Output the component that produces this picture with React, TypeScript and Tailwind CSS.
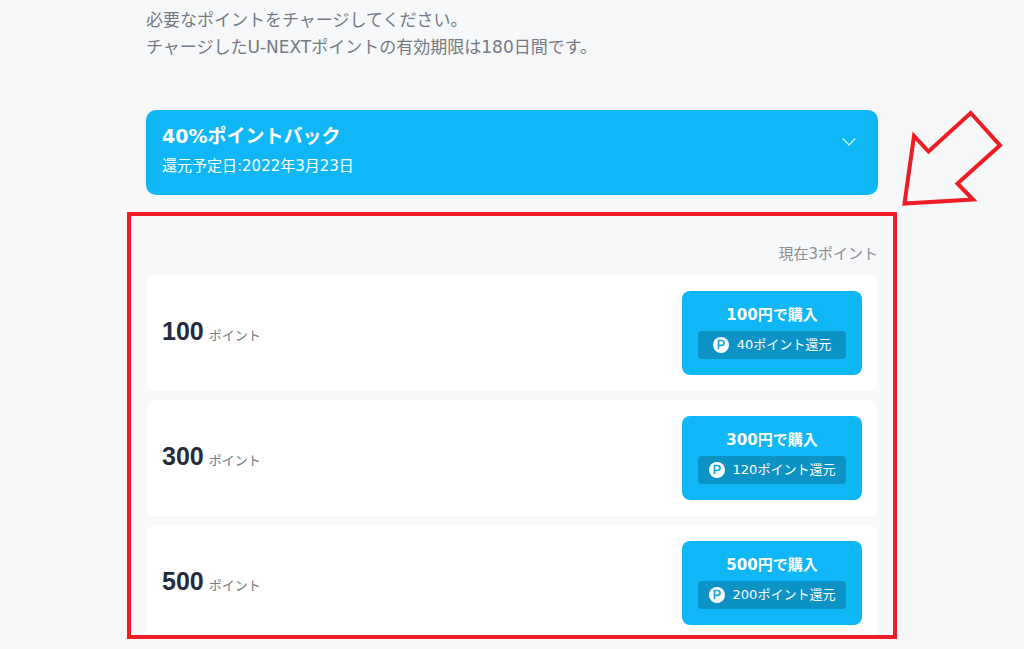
import { useState } from "react";

const PLANS = [
  { points: 100, price: 100, back: 40 },
  { points: 300, price: 300, back: 120 },
  { points: 500, price: 500, back: 200 }
];

function PointIcon() {
  return (
    <svg viewBox="0 0 16 16" className="size-4" fill="none" aria-hidden="true">
      <circle cx="8" cy="8" r="8" fill="#fff" />
      <path d="M5.500 12V3.500h3a2.400 2.400 0 0 1 0 4.900h-3" stroke="#10a9e6" strokeWidth="1.700" />
    </svg>
  );
}

function PlanCard({ points, price, back }: { points: number; price: number; back: number }) {
  return (
    <li className="flex items-center justify-between rounded-[10px] bg-white p-4">
      <p className="pb-1 text-[13px] text-[#747a83]">
        <span className="mr-[5px] font-['Liberation_Sans',sans-serif] text-[25px] leading-8 font-bold text-[#222c3c]">
          {points}
        </span>
        ポイント
      </p>
      <button
        type="button"
        className="flex h-[84px] w-[180px] flex-col items-center rounded-lg bg-[#10b7f7] px-4 pt-4 text-white"
      >
        <span className="text-[15px] leading-4 font-bold">{price}円で購入</span>
        <span className="mt-2 flex h-7 w-full items-center justify-center gap-2 rounded-sm bg-[#0d92c6] text-[13px] leading-4">
          <PointIcon />
          {back}ポイント還元
        </span>
      </button>
    </li>
  );
}

export default function App() {
  const [open, setOpen] = useState(false);

  return (
    <main className="relative min-h-screen bg-[#f7f8fa] px-4 pt-[7px] pb-[10px] font-['DejaVu_Sans','Noto_Sans_CJK_JP',sans-serif]">
      <div className="mx-auto max-w-[732px]">
        <p className="text-[17px] leading-[27px] text-[#747a83]">
          必要なポイントをチャージしてください。
          <br />
          チャージしたU-NEXTポイントの有効期限は180日間です。
        </p>
        <button
          type="button"
          aria-expanded={open}
          onClick={() => setOpen(!open)}
          className="mt-[49px] flex h-[85px] w-full items-start justify-between rounded-[10px] bg-[#10b7f7] px-4 pt-3 text-left text-white"
        >
          <span>
            <span className="block text-[19px] leading-7 font-bold">40%ポイントバック</span>
            <span className="block text-[15px] leading-8">還元予定日:2022年3月23日</span>
          </span>
          <svg viewBox="0 0 14 8" className="mt-4 mr-[6px] h-2 w-[14px]" fill="none" stroke="#d5f2fe" aria-hidden="true">
            <path d="M.7.5 7 6.900 13.300.5" strokeWidth="1.200" />
          </svg>
        </button>
      </div>

      <section className="mx-auto mt-[17px] h-[427px] max-w-[770px] overflow-hidden border-4 border-[#ee1c25] px-[15px] pt-[22px]">
        <p className="text-right text-[15px] leading-8 text-[#8b9098]">現在3ポイント</p>
        <ul className="mt-[5px] flex flex-col gap-[9px]">
          {PLANS.map((plan) => (
            <PlanCard key={plan.points} {...plan} />
          ))}
        </ul>
      </section>

      {/* callout arrow over the page, pointing at the list */}
      <svg
        viewBox="0 0 102 98"
        className="absolute top-[109px] right-[20px] h-[98px] w-[102px]"
        fill="none"
        stroke="#ee1c25"
        strokeWidth="4"
        aria-hidden="true"
      >
        <path d="M2.500 94.500 12 27l14.500 15.500L68.700 4 98 36.300 55.500 74.500 71 90.500Z" />
      </svg>
    </main>
  );
}
